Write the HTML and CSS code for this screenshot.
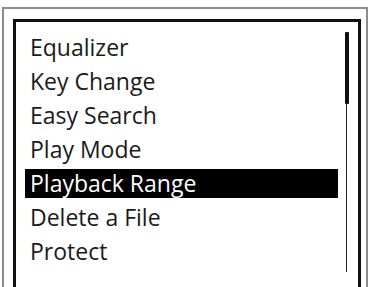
FILE: index.html
```html
<!DOCTYPE html>
<html>
<head>
<meta charset="utf-8">
<link rel="stylesheet" href="styles.css">
</head>
<body>
<div class="device">
  <div class="screen">
    <ul class="menu">
      <li class="item">Equalizer</li>
      <li class="item">Key Change</li>
      <li class="item">Easy Search</li>
      <li class="item">Play Mode</li>
      <li class="item selected">Playback Range</li>
      <li class="item">Delete a File</li>
      <li class="item">Protect</li>
    </ul>
    <div class="scrollbar">
      <div class="thumb"></div>
    </div>
  </div>
</div>
</body>
</html>
```
FILE: styles.css
```css
html, body {
  margin: 0;
  padding: 0;
  background: #fff;
  overflow: hidden;
}
body {
  width: 370px;
  height: 287px;
  font-family: "Open Sans", "Noto Sans", sans-serif;
}
.device {
  margin: 7px 2px 0 2px;
  height: 280px;
  border: 2px solid #8c8c8c;
  border-bottom: none;
  padding: 10px 5px 0 9px;
  box-sizing: border-box;
}
.screen {
  height: 270px;
  box-sizing: border-box;
  border: 3px solid #111;
  border-bottom: none;
  display: flex;
  padding: 9px 9px 0 9px;
  overflow: hidden;
}
.menu {
  list-style: none;
  margin: 0;
  padding: 0;
  flex: 1;
}
.item {
  height: 34px;
  line-height: 33px;
  font-size: 23px;
  color: #1a1a1a;
  padding-left: 5px;
  white-space: nowrap;
}
.item.selected {
  background: #000;
  color: #fff;
  height: 29px;
  line-height: 29px;
  margin: 2px 0 3px;
}
.scrollbar {
  width: 5px;
  margin-left: 6px;
  margin-top: 1px;
  height: 240px;
  display: flex;
  flex-direction: column;
  align-items: center;
  background: linear-gradient(#222, #222) center / 1px 100% no-repeat;
}
.thumb {
  width: 4px;
  height: 72px;
  background: #111;
  border-radius: 1px;
}
```
